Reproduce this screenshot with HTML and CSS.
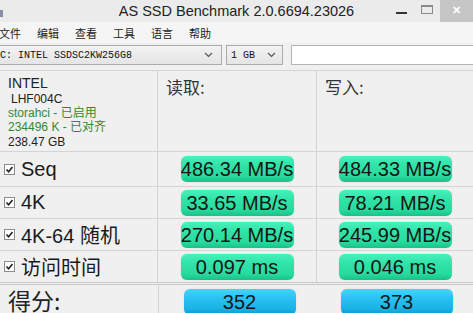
FILE: index.html
```html
<!DOCTYPE html>
<html lang="zh-CN">
<head>
    <meta charset="UTF-8">
    <title>AS SSD Benchmark</title>
    <link rel="stylesheet" href="styles.css">
</head>
<body>
    <div class="titlebar">
        <span class="app-icon"></span>
        <span class="title">AS SSD Benchmark 2.0.6694.23026</span>
        <div class="controls">
            <svg class="btn-min" width="12" height="22" viewBox="0 0 12 22"><rect x="0" y="12" width="11" height="2" fill="#333"/></svg>
            <svg class="btn-max" width="13" height="22" viewBox="0 0 13 22"><rect x="0.5" y="5.5" width="11" height="8" fill="none" stroke="#8a8a8a"/><rect x="0.5" y="5" width="11" height="2" fill="#8a8a8a"/></svg>
            <span class="btn-close">&#x2715;</span>
        </div>
    </div>

    <div class="menubar">
        <span>文件</span>
        <span>编辑</span>
        <span>查看</span>
        <span>工具</span>
        <span>语言</span>
        <span>帮助</span>
    </div>

    <div class="toolbar">
        <div class="combo drive">
            <span>C: INTEL SSDSC2KW256G8</span>
            <svg width="9" height="6" viewBox="0 0 9 6"><path d="M1 1 L4.5 4.5 L8 1" fill="none" stroke="#555" stroke-width="1.2"/></svg>
        </div>
        <div class="combo size">
            <span>1 GB</span>
            <svg width="9" height="6" viewBox="0 0 9 6"><path d="M1 1 L4.5 4.5 L8 1" fill="none" stroke="#555" stroke-width="1.2"/></svg>
        </div>
        <div class="textbox"></div>
    </div>

    <div class="grid">
        <div class="cell info">
            <div class="model">INTEL</div>
            <div class="fw">LHF004C</div>
            <div class="ok">storahci - 已启用</div>
            <div class="ok">234496 K - 已对齐</div>
            <div>238.47 GB</div>
        </div>
        <div class="cell head">读取:</div>
        <div class="cell head">写入:</div>

        <div class="cell label"><span class="check"></span>Seq</div>
        <div class="cell"><span class="pill">486.34 MB/s</span></div>
        <div class="cell"><span class="pill">484.33 MB/s</span></div>

        <div class="cell label"><span class="check"></span>4K</div>
        <div class="cell"><span class="pill">33.65 MB/s</span></div>
        <div class="cell"><span class="pill">78.21 MB/s</span></div>

        <div class="cell label"><span class="check"></span>4K-64 随机</div>
        <div class="cell"><span class="pill">270.14 MB/s</span></div>
        <div class="cell"><span class="pill">245.99 MB/s</span></div>

        <div class="cell label"><span class="check"></span>访问时间</div>
        <div class="cell"><span class="pill">0.097 ms</span></div>
        <div class="cell"><span class="pill">0.046 ms</span></div>
    </div>

    <div class="score">
        <div class="score-label">得分:</div>
        <div class="score-cell"><span class="pill blue">352</span></div>
        <div class="score-cell"><span class="pill blue">373</span></div>
    </div>
</body>
</html>
```

FILE: styles.css
```css
body {
    margin: 0;
    width: 473px;
    height: 313px;
    overflow: hidden;
    background: #f0f0f0;
    font-family: "Liberation Sans", "Noto Sans CJK SC", sans-serif;
    color: #1a1a1a;
}

.titlebar {
    display: grid;
    grid-template-columns: 1fr auto 1fr;
    align-items: center;
    height: 22px;
    background: #ebebeb;
}

.app-icon {
    width: 3px;
    height: 7px;
    margin-top: 4px;
    background: #8a8fa8;
}

.title {
    font-size: 14.5px;
    color: #222;
    line-height: 22px;
}

.controls {
    justify-self: end;
    display: flex;
    align-items: stretch;
    height: 22px;
}

.btn-min {
    flex: none;
    margin-right: 13px;
}

.btn-max {
    flex: none;
    margin-right: 6px;
}

.btn-close {
    width: 33px;
    background: #c6c6c6;
    color: #fff;
    font-size: 11px;
    font-weight: bold;
    text-align: center;
    line-height: 21px;
}

.menubar {
    display: flex;
    gap: 16px;
    height: 21px;
    align-items: center;
    background: #f5f5f5;
    font-family: "Noto Sans CJK SC", sans-serif;
    font-size: 11px;
    color: #222;
    margin-left: -1px;
}

.menubar span {
    width: 22px;
}

.toolbar {
    display: flex;
    align-items: center;
    height: 24px;
    background: #f0f0f0;
}

.combo {
    display: flex;
    align-items: center;
    justify-content: space-between;
    height: 20px;
    box-sizing: border-box;
    border: 1px solid #acacac;
    background: linear-gradient(#f2f2f2, #e5e5e5);
    font-family: "Liberation Mono", monospace;
    font-size: 10px;
    color: #111;
}

.drive {
    width: 223px;
    margin-left: -1px;
    padding: 0 8px 0 0;
}

.size {
    width: 57px;
    margin-left: 4px;
    padding: 0 6px 0 4px;
}

.textbox {
    flex: 1;
    height: 20px;
    margin-left: 8px;
    box-sizing: border-box;
    border: 1px solid #b5b5b5;
    border-right: none;
    background: #fff;
}

.grid {
    display: grid;
    grid-template-columns: 157px 158px 1fr;
    grid-template-rows: 80px 34px 31px 31px 31px;
    gap: 1px;
    margin-top: 3px;
    padding-top: 1px;
    background: #d4d4d4;
}

.cell {
    background: #f0f0f0;
    display: flex;
    align-items: center;
    justify-content: center;
}

.info {
    display: block;
    padding: 4px 0 0 8px;
    font-size: 12px;
    line-height: 14.2px;
    color: #222;
}

.info .model {
    font-size: 14px;
    line-height: 17px;
}

.info .fw {
    padding-left: 3px;
}

.info .ok {
    color: #2f8a2f;
}

.head {
    display: block;
    padding: 3px 0 0 8px;
    font-family: "Noto Sans CJK SC", sans-serif;
    font-size: 17px;
    color: #333;
}

.label {
    justify-content: flex-start;
    padding-left: 4px;
    font-size: 20px;
    color: #1a1a1a;
}

.check {
    width: 9px;
    height: 9px;
    margin-right: 6px;
    border: 1px solid #8c8c8c;
    background: #fff url("data:image/svg+xml;utf8,<svg xmlns='http://www.w3.org/2000/svg' width='9' height='9'><path d='M1.5 4.5 L3.6 6.8 L7.5 2' fill='none' stroke='%23222' stroke-width='1.6'/></svg>") no-repeat center;
}

.pill {
    width: 113px;
    height: 26px;
    border-radius: 6px;
    background: linear-gradient(#48f0bc 0%, #30e4a7 35%, #28dc9f 75%, #17c288 100%);
    box-shadow: 0 0 1px rgba(0, 120, 80, 0.4);
    font-size: 20px;
    line-height: 27px;
    text-align: center;
    white-space: nowrap;
    color: #151515;
}

.score {
    display: grid;
    grid-template-columns: 159px 1fr 1fr;
    border-top: 3px double #c8c8c8;
    height: 40px;
}

.score-label {
    border-right: 1px solid #d4d4d4;
    padding: 0 0 0 8px;
    font-family: "Noto Sans CJK SC", sans-serif;
    font-size: 23px;
    line-height: 30px;
    color: #222;
}

.score-cell {
    display: flex;
    justify-content: center;
    padding: 4px 0 0 4px;
}

.pill.blue {
    width: 112px;
    background: linear-gradient(#45d4fa 0%, #26c0f0 40%, #1bb3e6 75%, #0d98cf 100%);
}
```
